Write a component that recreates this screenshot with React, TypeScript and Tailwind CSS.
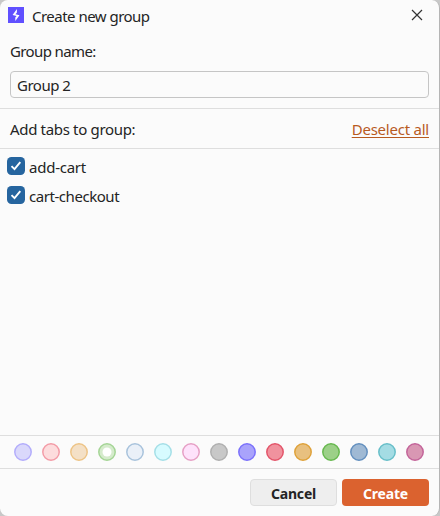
const tabs = [
  { name: "add-cart", spacing: "tracking-[-0.24px]" },
  { name: "cart-checkout", spacing: "tracking-[-0.45px]" },
]

const colors = [
  { fill: "#dad8fb", stroke: "#b3adfb" },
  { fill: "#fddcdd", stroke: "#f39ca7" },
  { fill: "#f4e0c6", stroke: "#edc487" },
  { fill: "#d5ebcc", stroke: "#a5d596", selected: true },
  { fill: "#eaf0f8", stroke: "#a9c3dc" },
  { fill: "#d7fbff", stroke: "#a5dfe7" },
  { fill: "#fee2fb", stroke: "#e6a0c5" },
  { fill: "#c8c8c8", stroke: "#b0b0b0" },
  { fill: "#a9a3fb", stroke: "#7c72fb" },
  { fill: "#f0929e", stroke: "#e3566b" },
  { fill: "#e8c07f", stroke: "#dfa23b" },
  { fill: "#9cd088", stroke: "#68b950" },
  { fill: "#9fb9d4", stroke: "#6490bf" },
  { fill: "#a4dce4", stroke: "#68bfc9" },
  { fill: "#d997b3", stroke: "#c4659a" },
]

function Checkbox() {
  return (
    <svg className="size-[18px] shrink-0" viewBox="0 0 18 18" fill="none">
      <rect width="18" height="18" rx="4.5" fill="#26659f" />
      <path d="M4.5 9.2 7.5 12.2 13.3 5.2" stroke="#fff" strokeWidth="1.9" />
    </svg>
  )
}

export default function App() {
  return (
    <div className="w-[440px] h-[516px] bg-[#c8c8c8] overflow-hidden">
      <div className="flex flex-col w-[440px] h-[516px] rounded-lg border-r border-[#b5b5b5] bg-[#fbfbfb] text-[#242424] font-['Noto_Sans','Open_Sans',sans-serif] text-[15px] leading-5 overflow-hidden">
        {/* Title bar */}
        <div className="flex items-start h-10 pl-2 pr-4 shrink-0">
          <svg className="size-4 mt-[7px] mr-2 shrink-0" viewBox="0 0 16 16">
            <rect width="16" height="16" fill="#6050ff" />
            <path d="M8.9 2v3.6L7.4 7.3 11.5 8.2 7.3 14V10.6L8.6 9 4.6 8Z" fill="#fff" />
          </svg>
          <h1 className="mt-[6px] tracking-[-0.52px] whitespace-nowrap">Create new group</h1>
          <button className="ml-auto mt-[9px]" aria-label="Close">
            <svg className="size-3" viewBox="0 0 12 12" fill="none">
              <path d="M1 1 11 11M11 1 1 11" stroke="#333" strokeWidth="1.2" />
            </svg>
          </button>
        </div>

        {/* Group name */}
        <div className="h-[68px] px-[10px] shrink-0">
          <label className="block pt-px tracking-[-0.62px]">Group name:</label>
          <div className="mt-[10px] h-[27px] border border-[#c5c5c5] rounded-[4px] px-[6px] flex items-center">
            <span className="tracking-[-0.5px]">Group 2</span>
          </div>
        </div>

        <div className="flex items-center justify-between h-[41px] px-[10px] border-y border-[#dedede] shrink-0">
          <span className="tracking-[-0.33px]">Add tabs to group:</span>
          <button className="text-[#b85a1f] underline underline-offset-2 tracking-[-0.23px]">Deselect all</button>
        </div>

        {/* Tabs */}
        <div className="flex-1 pt-[8px] pl-[7px]">
          {tabs.map((tab) => (
            <label key={tab.name} className="flex items-start h-[29px]">
              <Checkbox />
              <span className={`ml-1 ${tab.spacing}`}>{tab.name}</span>
            </label>
          ))}
        </div>

        {/* Colors */}
        <div className="flex items-center gap-[10px] h-[34px] pl-[14px] border-y border-[#dedede] shrink-0">
          {colors.map((color) => (
            <svg key={color.fill} className="size-[18px] shrink-0" viewBox="0 0 18 18">
              <circle cx="9" cy="9" r="8.2" fill={color.fill} stroke={color.stroke} strokeWidth="1.5" />
              {color.selected && <circle cx="9" cy="9" r="4.5" fill="#fff" />}
            </svg>
          ))}
        </div>

        {/* Footer */}
        <div className="flex gap-[5px] justify-end h-[47px] pt-[10px] pr-[10px] shrink-0 text-[14px] font-bold">
          <button className="w-[87px] h-[27px] pt-[2px] rounded-[4px] border border-[#dedede] bg-[#eeeeee] tracking-[-0.2px]">Cancel</button>
          <button className="w-[87px] h-[27px] pt-[2px] rounded-[4px] bg-[#db622f] text-white tracking-[-0.2px]">Create</button>
        </div>
      </div>
    </div>
  )
}
